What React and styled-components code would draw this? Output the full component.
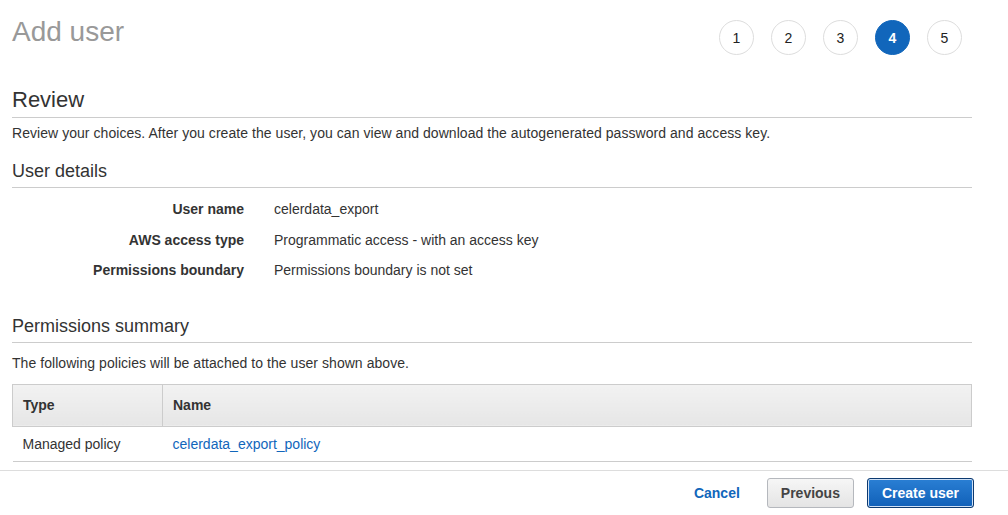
import React from 'react';
import styled, { createGlobalStyle } from 'styled-components';

const GlobalStyle = createGlobalStyle`
  body {
    margin: 0;
    background: #fff;
    font-family: "Liberation Sans", Arial, Helvetica, sans-serif;
    color: #333;
  }
`;

const Page = styled.div`
  width: 1008px;
  height: 515px;
  overflow: hidden;
  display: flex;
  flex-direction: column;
`;

const Content = styled.div`
  padding: 0 36px 0 12px;
  flex: 1;
`;

const Header = styled.div`
  height: 87px;
  padding-top: 20px;
  box-sizing: border-box;
  display: flex;
  justify-content: space-between;
  align-items: flex-start;
`;

const Title = styled.h1`
  margin: -2px 0 0;
  font-size: 28px;
  line-height: 28px;
  font-weight: 400;
  color: #999;
`;

const Steps = styled.div`
  display: flex;
  gap: 17px;
  margin-right: 10px;
`;

const Step = styled.div`
  width: 35px;
  height: 35px;
  box-sizing: border-box;
  border-radius: 50%;
  border: 1px solid ${(p) => (p.$active ? '#1166bb' : '#dddddd')};
  background: ${(p) => (p.$active ? '#1166bb' : '#fff')};
  color: ${(p) => (p.$active ? '#fff' : '#222')};
  font-size: 14px;
  font-weight: ${(p) => (p.$active ? 700 : 400)};
  display: flex;
  align-items: center;
  justify-content: center;
`;

const Heading = styled.h2`
  margin: ${(p) => p.$mt || 0}px 0 0;
  font-size: ${(p) => (p.$large ? 22 : 18)}px;
  line-height: ${(p) => (p.$large ? 26 : 22)}px;
  font-weight: 400;
  color: #333;
  padding-bottom: ${(p) => (p.$large ? 4 : 5)}px;
  border-bottom: 1px solid #cccccc;
`;

const Text = styled.p`
  margin: ${(p) => p.$mt}px 0 0;
  font-size: 14px;
  line-height: 20px;
  letter-spacing: 0.05px;
  color: #333;
`;

const Details = styled.div`
  margin-top: 6px;
  display: flex;
  flex-direction: column;
`;

const DetailRow = styled.div`
  display: grid;
  grid-template-columns: 232px 1fr;
  column-gap: 30px;
  height: 30.5px;
  align-items: center;
  font-size: 14px;
`;

const Label = styled.span`
  text-align: right;
  font-weight: 700;
  color: #333;
`;

const Value = styled.span`
  color: #333;
`;

const Table = styled.table`
  margin-top: 11px;
  width: 100%;
  border-collapse: collapse;
  font-size: 14px;
`;

const Th = styled.th`
  height: 42px;
  padding: 0 10px;
  text-align: left;
  font-weight: 700;
  color: #333;
  background: linear-gradient(#f2f2f2, #e6e6e6);
  border: 1px solid #cccccc;
  width: ${(p) => p.$w || 'auto'};
  box-sizing: border-box;
`;

const Td = styled.td`
  height: 34px;
  padding: 0 10px;
  border-bottom: 1px solid #cccccc;
  color: #333;
`;

const Link = styled.a`
  color: #1166bb;
  text-decoration: none;
`;

const Footer = styled.div`
  margin-top: 8px;
  border-top: 1px solid #dddddd;
  padding: 7px 34px 7px 0;
  display: flex;
  justify-content: flex-end;
  align-items: center;
  gap: 13px;
`;

const CancelLink = styled.a`
  color: #1166bb;
  font-weight: 700;
  font-size: 14px;
  margin-right: 14px;
`;

const Button = styled.button`
  height: 30px;
  padding: 0 ${(p) => (p.$primary ? 14 : 13)}px;
  border-radius: 3px;
  font-family: inherit;
  font-size: 14px;
  font-weight: 700;
  color: ${(p) => (p.$primary ? '#fff' : '#444')};
  background: ${(p) =>
    p.$primary
      ? 'linear-gradient(#2a7fd4, #1060b8)'
      : 'linear-gradient(#f6f6f6, #e4e4e4)'};
  border: 1px solid ${(p) => (p.$primary ? '#0d3a70' : '#b5b8bd')};
  box-shadow: ${(p) => (p.$primary ? 'inset 0 0 0 1px #cfe0f5' : 'none')};
`;

export default function App() {
  return (
    <Page>
      <GlobalStyle />
      <Content>
        <Header>
          <Title>Add user</Title>
          <Steps>
            {[1, 2, 3, 4, 5].map((n) => (
              <Step key={n} $active={n === 4}>
                {n}
              </Step>
            ))}
          </Steps>
        </Header>

        <Heading $large>Review</Heading>
        <Text $mt={5}>
          Review your choices. After you create the user, you can view and download the
          autogenerated password and access key.
        </Text>

        <Heading $mt={17}>User details</Heading>
        <Details>
          <DetailRow>
            <Label>User name</Label>
            <Value>celerdata_export</Value>
          </DetailRow>
          <DetailRow>
            <Label>AWS access type</Label>
            <Value>Programmatic access - with an access key</Value>
          </DetailRow>
          <DetailRow>
            <Label>Permissions boundary</Label>
            <Value>Permissions boundary is not set</Value>
          </DetailRow>
        </Details>

        <Heading $mt={29}>Permissions summary</Heading>
        <Text $mt={10}>The following policies will be attached to the user shown above.</Text>
        <Table>
          <thead>
            <tr>
              <Th $w="150px">Type</Th>
              <Th>Name</Th>
            </tr>
          </thead>
          <tbody>
            <tr>
              <Td>Managed policy</Td>
              <Td>
                <Link href="#">celerdata_export_policy</Link>
              </Td>
            </tr>
          </tbody>
        </Table>
      </Content>
      <Footer>
        <CancelLink>Cancel</CancelLink>
        <Button>Previous</Button>
        <Button $primary>Create user</Button>
      </Footer>
    </Page>
  );
}
